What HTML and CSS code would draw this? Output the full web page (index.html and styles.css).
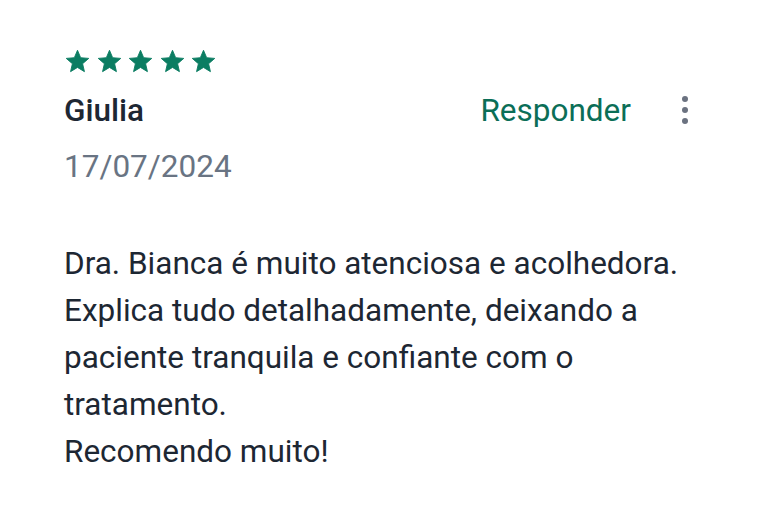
FILE: index.html
```html
<!DOCTYPE html>
<html lang="pt">
<head>
<meta charset="utf-8">
<link rel="stylesheet" href="styles.css">
</head>
<body>
<div class="review">
  <div class="stars">
    <svg class="star" viewBox="0 0 24 24"><path d="M12 17.27L18.18 21l-1.64-7.03L22 9.24l-7.19-.61L12 2 9.19 8.63 2 9.24l5.46 4.73L5.82 21z"/></svg>
    <svg class="star" viewBox="0 0 24 24"><path d="M12 17.27L18.18 21l-1.64-7.03L22 9.24l-7.19-.61L12 2 9.19 8.63 2 9.24l5.46 4.73L5.82 21z"/></svg>
    <svg class="star" viewBox="0 0 24 24"><path d="M12 17.27L18.18 21l-1.64-7.03L22 9.24l-7.19-.61L12 2 9.19 8.63 2 9.24l5.46 4.73L5.82 21z"/></svg>
    <svg class="star" viewBox="0 0 24 24"><path d="M12 17.27L18.18 21l-1.64-7.03L22 9.24l-7.19-.61L12 2 9.19 8.63 2 9.24l5.46 4.73L5.82 21z"/></svg>
    <svg class="star" viewBox="0 0 24 24"><path d="M12 17.27L18.18 21l-1.64-7.03L22 9.24l-7.19-.61L12 2 9.19 8.63 2 9.24l5.46 4.73L5.82 21z"/></svg>
  </div>
  <div class="header">
    <div class="name">Giulia</div>
    <div class="actions">
      <span class="reply">Responder</span>
      <span class="more"><i></i><i></i><i></i></span>
    </div>
  </div>
  <div class="date">17/07/2024</div>
  <p class="text">Dra. Bianca é muito atenciosa e acolhedora.<br>Explica tudo detalhadamente, deixando a paciente tranquila e confiante com o tratamento.<br>Recomendo muito!</p>
</div>
</body>
</html>
```
FILE: styles.css
```css
html, body { margin: 0; padding: 0; background: #fff; }
body { font-family: Roboto, "Noto Sans", sans-serif; }
.review { padding: 46px 0 0 64px; width: 630px; }
.stars { display: flex; gap: 4.5px; margin-left: 0; height: 30px; align-items: center; }
.star { width: 27px; height: 27px; fill: #0b7d62; stroke: #0b7d62; stroke-width: 0.8; stroke-linejoin: round; }
.header { display: flex; justify-content: space-between; align-items: center; margin-top: 14px; height: 40px; }
.name { font-size: 31.5px; font-weight: 500; color: #1d2733; }
.actions { display: flex; align-items: center; gap: 51px; }
.reply { font-size: 31.5px; color: #0b6e57; }
.more { display: flex; flex-direction: column; gap: 5px; margin-right: 6px; }
.more i { width: 6px; height: 6px; border-radius: 50%; background: #6b7280; display: block; }
.date { font-size: 31.5px; line-height: 37px; color: #697483; margin-top: 18px; }
.text { font-size: 31.5px; line-height: 47px; color: #1d2733; margin: 54.5px 0 0; width: 620px; }
```
